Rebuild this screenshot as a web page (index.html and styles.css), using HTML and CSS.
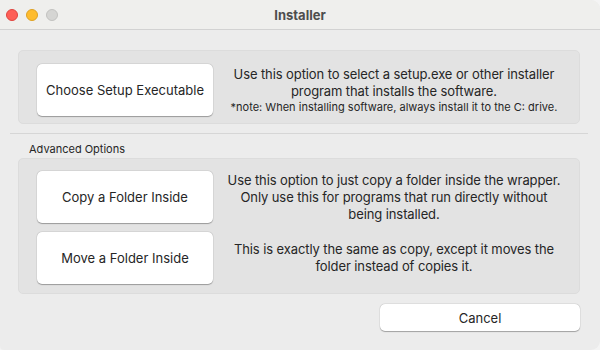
FILE: index.html
```html
<!DOCTYPE html>
<html lang="en">
<head>
  <meta charset="UTF-8" /><meta name="viewport" content="width=device-width,initial-scale=1"/>
  <title>Installer</title>
  <link rel="stylesheet" href="styles.css">
</head>
<body>

  <div class="window">
    <!-- Title bar -->
    <div class="titlebar">
      <div class="lights">
        <span class="light red"></span>
        <span class="light yellow"></span>
        <span class="light gray"></span>
      </div>
      <div class="title">Installer</div>
    </div>

    <div class="content">
      <div class="box">
        <div class="row">
          <button class="btn big">Choose Setup Executable</button>
          <div class="desc">
            Use this option to select a setup.exe or other installer<br>program that installs the software.
            <div class="note">*note: When installing software, always install it to the C: drive.</div>
          </div>
        </div>
      </div>

      <div class="sep"></div>
      <div class="label">Advanced Options</div>

      <div class="box adv">
        <div class="row">
          <button class="btn big">Copy a Folder Inside</button>
          <div class="desc">Use this option to just copy a folder inside the wrapper.<br>Only use this for programs that run directly without<br>being installed.</div>
        </div>
        <div class="row">
          <button class="btn big">Move a Folder Inside</button>
          <div class="desc">This is exactly the same as copy, except it moves the<br>folder instead of copies it.</div>
        </div>
      </div>

      <div class="footer">
        <button class="btn cancel">Cancel</button>
      </div>
    </div>
  </div>

</body>
</html>
```

FILE: styles.css
```css
body { margin: 0; background: #f4f4f4; font-family: Inter, "Noto Sans", sans-serif; color: #262626; }
.window { width: 600px; height: 350px; background: #ececec; border-radius: 0 9px 9px 4px; overflow: hidden; display: flex; flex-direction: column; }
.titlebar { height: 30px; background: #efefed; border-bottom: 1px solid #d2d2d2; display: flex; align-items: center; position: relative; box-sizing: border-box; }
.lights { display: flex; gap: 8px; padding-left: 6px; }
.light { width: 12px; height: 12px; border-radius: 50%; box-sizing: border-box; }
.red { background: #fe5f57; border: 0.5px solid #e0443e; }
.yellow { background: #febc2e; border: 0.5px solid #dea123; }
.gray { background: #d5d5d3; border: 0.5px solid #c2c2c0; }
.title { position: absolute; left: 0; right: 0; text-align: center; font-size: 13px; font-weight: 700; color: #4d4d4d; pointer-events: none; }
.content { padding: 20px 20px 0 18px; }
.box { background: #e3e3e3; border: 1px solid #dcdcdc; border-radius: 5px; padding: 13px 12px 7px 18px; height: 74px; box-sizing: border-box; }
.box.adv { height: 136px; padding: 12px 12px 9px 18px; display: flex; flex-direction: column; gap: 9px; }
.row { display: flex; align-items: center; }
.btn { font-family: inherit; font-size: 13px; color: #262626; background: #fff; border: none; border-radius: 5px; box-shadow: 0 0.5px 1px rgba(0,0,0,0.3), 0 0 0 0.5px rgba(0,0,0,0.06); }
.btn.big { width: 176px; height: 52px; flex-shrink: 0; }
.desc { flex: 1; text-align: center; font-size: 13px; line-height: 17px; margin-left: 8px; letter-spacing: -0.1px; white-space: nowrap; }
.note { font-size: 11px; line-height: 15px; letter-spacing: 0; }
.sep { height: 1px; background: #d6d6d6; margin: 9px -8px 0; }
.label { font-size: 11px; padding: 8px 0 0 11px; height: 15px; margin-bottom: 1px; }
.footer { display: flex; justify-content: flex-end; padding-top: 10px; }
.btn.cancel { width: 200px; height: 27px; }
```
